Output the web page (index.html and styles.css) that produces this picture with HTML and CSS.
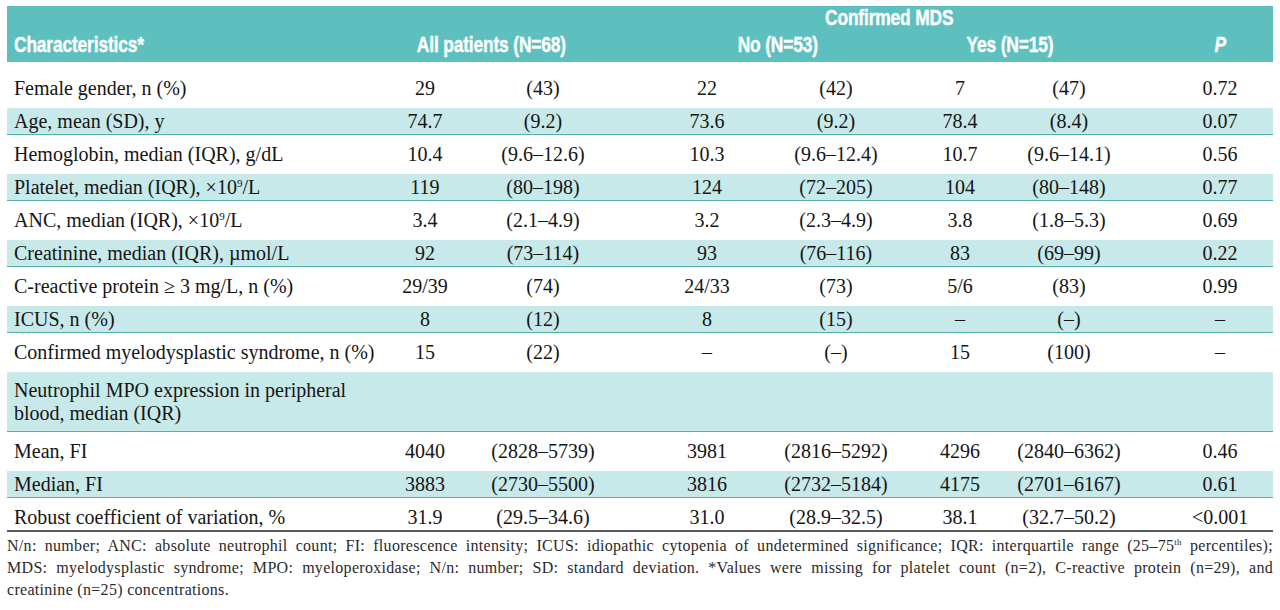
FILE: index.html
```html
<!DOCTYPE html>
<html>
<head>
<meta charset="utf-8">
<title>Table</title>
<link rel="stylesheet" href="styles.css">
</head>
<body>
<div class="page">
<table class="tbl">
<colgroup>
<col class="w0"><col class="w1"><col class="w2"><col class="w3"><col class="w4"><col class="w5"><col class="w6"><col class="w7">
</colgroup>
<thead>
<tr class="hr1">
<th class="lab"></th><th colspan="2"></th><th colspan="4" class="h-mds"><span class="hx">Confirmed MDS</span></th><th></th>
</tr>
<tr class="hr2">
<th class="lab"><span class="hx hx-left">Characteristics*</span></th><th colspan="2" class="h-all"><span class="hx">All patients (N=68)</span></th><th colspan="2" class="h-no"><span class="hx">No (N=53)</span></th><th colspan="2" class="h-yes"><span class="hx">Yes (N=15)</span></th><th class="h-p"><span class="hx"><i>P</i></span></th>
</tr>
</thead>
<tbody>
<tr class="first"><td class="lab">Female gender, n (%)</td><td>29</td><td>(43)</td><td class="k3">22</td><td>(42)</td><td class="k5">7</td><td>(47)</td><td class="k7">0.72</td></tr>
<tr class="alt"><td class="lab">Age, mean (SD), y</td><td>74.7</td><td>(9.2)</td><td class="k3">73.6</td><td>(9.2)</td><td class="k5">78.4</td><td>(8.4)</td><td class="k7">0.07</td></tr>
<tr><td class="lab">Hemoglobin, median (IQR), g/dL</td><td>10.4</td><td>(9.6–12.6)</td><td class="k3">10.3</td><td>(9.6–12.4)</td><td class="k5">10.7</td><td>(9.6–14.1)</td><td class="k7">0.56</td></tr>
<tr class="alt"><td class="lab">Platelet, median (IQR), ×10<sup>9</sup>/L</td><td>119</td><td>(80–198)</td><td class="k3">124</td><td>(72–205)</td><td class="k5">104</td><td>(80–148)</td><td class="k7">0.77</td></tr>
<tr><td class="lab">ANC, median (IQR), ×10<sup>9</sup>/L</td><td>3.4</td><td>(2.1–4.9)</td><td class="k3">3.2</td><td>(2.3–4.9)</td><td class="k5">3.8</td><td>(1.8–5.3)</td><td class="k7">0.69</td></tr>
<tr class="alt"><td class="lab">Creatinine, median (IQR), µmol/L</td><td>92</td><td>(73–114)</td><td class="k3">93</td><td>(76–116)</td><td class="k5">83</td><td>(69–99)</td><td class="k7">0.22</td></tr>
<tr><td class="lab">C-reactive protein ≥ 3 mg/L, n (%)</td><td>29/39</td><td>(74)</td><td class="k3">24/33</td><td>(73)</td><td class="k5">5/6</td><td>(83)</td><td class="k7">0.99</td></tr>
<tr class="alt"><td class="lab">ICUS, n (%)</td><td>8</td><td>(12)</td><td class="k3">8</td><td>(15)</td><td class="k5">–</td><td>(–)</td><td class="k7">–</td></tr>
<tr><td class="lab">Confirmed myelodysplastic syndrome, n (%)</td><td>15</td><td>(22)</td><td class="k3">–</td><td>(–)</td><td class="k5">15</td><td>(100)</td><td class="k7">–</td></tr>
<tr class="alt tall"><td class="lab">Neutrophil MPO expression in peripheral<br>blood, median (IQR)</td><td></td><td></td><td class="k3"></td><td></td><td class="k5"></td><td></td><td class="k7"></td></tr>
<tr><td class="lab">Mean, FI</td><td>4040</td><td>(2828–5739)</td><td class="k3">3981</td><td>(2816–5292)</td><td class="k5">4296</td><td>(2840–6362)</td><td class="k7">0.46</td></tr>
<tr class="alt"><td class="lab">Median, FI</td><td>3883</td><td>(2730–5500)</td><td class="k3">3816</td><td>(2732–5184)</td><td class="k5">4175</td><td>(2701–6167)</td><td class="k7">0.61</td></tr>
<tr class="last"><td class="lab">Robust coefficient of variation, %</td><td>31.9</td><td>(29.5–34.6)</td><td class="k3">31.0</td><td>(28.9–32.5)</td><td class="k5">38.1</td><td>(32.7–50.2)</td><td class="k7">&lt;0.001</td></tr>
</tbody>
</table>
<div class="notes">
<span class="nl just">N/n: number; ANC: absolute neutrophil count; FI: fluorescence intensity; ICUS: idiopathic cytopenia of undetermined significance; IQR: interquartile range (25–75<sup>th</sup> percentiles);</span>
<span class="nl just">MDS: myelodysplastic syndrome; MPO: myeloperoxidase; N/n: number; SD: standard deviation. *Values were missing for platelet count (n=2), C-reactive protein (n=29), and</span>
<span class="nl">creatinine (n=25) concentrations.</span>
</div>
</div>
</body>
</html>
```

FILE: styles.css
```css
html, body {
  margin: 0;
  padding: 0;
  background: #ffffff;
}

.page {
  padding: 6px 7px 0 7px;
  width: 1266px;
}

.tbl {
  width: 1266px;
  table-layout: fixed;
  border-collapse: separate;
  border-spacing: 0;
  font-family: "Liberation Serif", "Times New Roman", serif;
  font-size: 20px;
  color: #151515;
}

.w0 { width: 373px; }
.w1 { width: 90px; }
.w2 { width: 146px; }
.w3 { width: 160px; }
.w4 { width: 120px; }
.w5 { width: 118px; }
.w6 { width: 110px; }
.w7 { width: 149px; }

.tbl thead th {
  background: #5ebfbf;
  color: #ffffff;
  font-family: "Liberation Sans", Arial, sans-serif;
  font-weight: 700;
  font-size: 22px;
  text-align: center;
  white-space: nowrap;
  padding: 0;
  vertical-align: top;
  line-height: 24px;
}

.tbl thead tr.hr1 th {
  height: 24px;
}

.tbl thead tr.hr2 th {
  padding-top: 3px;
  padding-bottom: 5px;
}

.hx {
  display: inline-block;
  transform: scaleX(0.79);
  transform-origin: 50% 50%;
  letter-spacing: -0.2px;
  -webkit-text-stroke: 0.4px #ffffff;
}

.hx.hx-left {
  transform-origin: 0 50%;
}

.tbl thead th.lab {
  text-align: left;
  padding-left: 7px;
}

.tbl thead th.h-mds { padding-left: 38px; }
.tbl thead th.h-all { padding-right: 14px; }
.tbl thead th.h-no { padding-left: 44px; }
.tbl thead th.h-p { padding-left: 43px; }

.tbl thead th i {
  font-style: italic;
}

.tbl td {
  padding: 0;
  line-height: 26px;
  border-top: 6px solid #ffffff;
  border-bottom: 1px solid #ffffff;
  text-align: center;
  white-space: nowrap;
  vertical-align: middle;
}

.tbl td.lab {
  text-align: left;
  padding-left: 7px;
}

.tbl td.k3 { padding-left: 22px; }
.tbl td.k5 { padding-left: 10px; }
.tbl td.k7 { padding-left: 43px; }

.tbl tr.first td {
  border-top-width: 13px;
}

.tbl tr.alt td {
  background: #c7e9e9;
  border-bottom-color: #5aafaf;
}

.tbl tr.tall td {
  line-height: 23px;
  padding-top: 7px;
  padding-bottom: 6px;
}

.tbl tr.last td {
  border-bottom: 2px solid #5a5a5a;
}

.tbl sup {
  font-size: 11px;
  line-height: 0;
  vertical-align: 7px;
}

.notes {
  margin-top: 3px;
  font-family: "Liberation Serif", "Times New Roman", serif;
  font-size: 16px;
  line-height: 22px;
  letter-spacing: 0.3px;
  color: #2a2a2a;
}

.nl {
  display: block;
  text-align: left;
}

.nl.just {
  text-align: justify;
  text-align-last: justify;
}

.notes sup {
  font-size: 9px;
  line-height: 0;
  vertical-align: 6px;
}
```
